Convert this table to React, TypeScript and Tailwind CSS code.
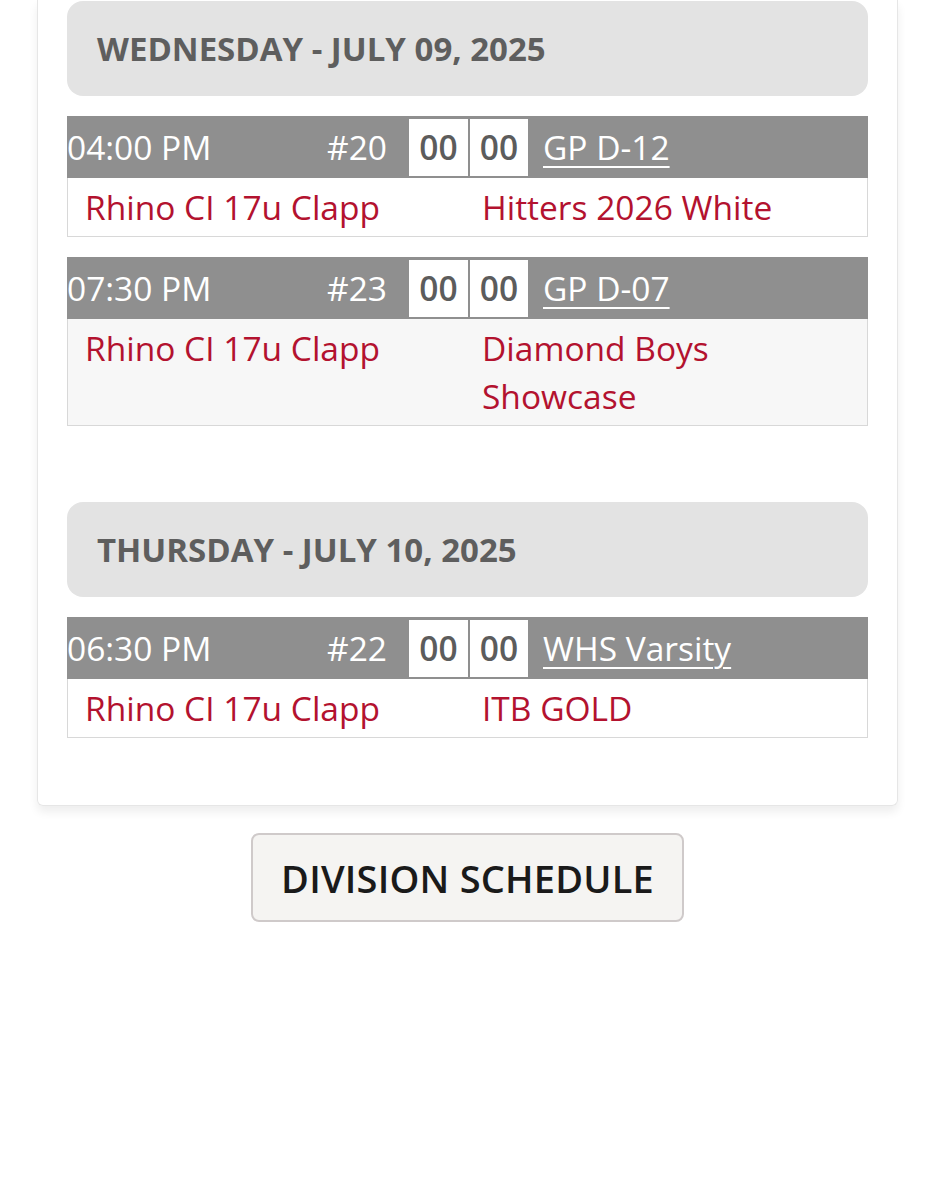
import React from "react";

interface Match {
  time: string;
  num: string;
  venue: string;
  home: string;
  away: string;
}

interface Day {
  label: string;
  matches: Match[];
}

const days: Day[] = [
  {
    label: "WEDNESDAY - JULY 09, 2025",
    matches: [
      { time: "04:00 PM", num: "#20", venue: "GP D-12", home: "Rhino CI 17u Clapp", away: "Hitters 2026 White" },
      { time: "07:30 PM", num: "#23", venue: "GP D-07", home: "Rhino CI 17u Clapp", away: "Diamond Boys Showcase" },
    ],
  },
  {
    label: "THURSDAY - JULY 10, 2025",
    matches: [
      { time: "06:30 PM", num: "#22", venue: "WHS Varsity", home: "Rhino CI 17u Clapp", away: "ITB GOLD" },
    ],
  },
];

const MatchCard = ({ match, striped }: { match: Match; striped: boolean }) => {
  return (
    <div className="w-full">
      <div className="flex h-[62px] items-center bg-[#8f8f8f] text-white">
        <div className="flex w-[342px] items-center justify-between pr-[22px]">
          <span>{match.time}</span>
          <span>{match.num}</span>
        </div>
        <div className="flex h-[57px] w-[59px] items-center justify-center bg-white font-semibold text-[#5c5c5c]">00</div>
        <div className="ml-[2px] flex h-[57px] w-[58px] items-center justify-center bg-white font-semibold text-[#5c5c5c]">00</div>
        <a href="#" className="pl-[15px] underline decoration-[2px] underline-offset-[6px]">
          {match.venue}
        </a>
      </div>
      <div
        className={
          "flex border border-t-0 border-[#d8d8d8] py-[5px] text-[#b3122f] " +
          (striped ? "bg-[#f7f7f7]" : "bg-white")
        }
      >
        <div className="w-[414px] shrink-0 pl-[17px]">{match.home}</div>
        <div className="flex-1 pr-[10px]">{match.away}</div>
      </div>
    </div>
  );
};

export default function App() {
  return (
    <div
      className="min-h-[1200px] bg-white text-[33.5px] leading-[48px]"
      style={{ fontFamily: '"Open Sans", "Liberation Sans", sans-serif' }}
    >
      <div className="px-[37px]">
        <div className="rounded-b-[6px] border border-t-0 border-[#e6e6e6] px-[29px] pt-[1px] pb-[67px] shadow-[0_6px_10px_rgba(0,0,0,0.07)]">
          {days.map((day, di) => (
            <div key={di} className={di > 0 ? "mt-[76px]" : ""}>
              <div className="flex h-[95px] items-center rounded-[16px] bg-[#e3e3e3] px-[30px] text-[33px] font-bold text-[#5e5e5e]">
                {day.label}
              </div>
              {day.matches.map((m, mi) => (
                <div key={mi} className="mt-[20px]">
                  <MatchCard match={m} striped={mi % 2 === 1} />
                </div>
              ))}
            </div>
          ))}
        </div>
      </div>
      <div className="mt-[27px] flex justify-center">
        <button className="h-[89px] w-[433px] rounded-[8px] border-2 border-[#cfcaca] bg-[#f5f4f2] text-[38px] font-semibold tracking-[0.2px] text-[#1a1a1a]">
          DIVISION SCHEDULE
        </button>
      </div>
    </div>
  );
}
